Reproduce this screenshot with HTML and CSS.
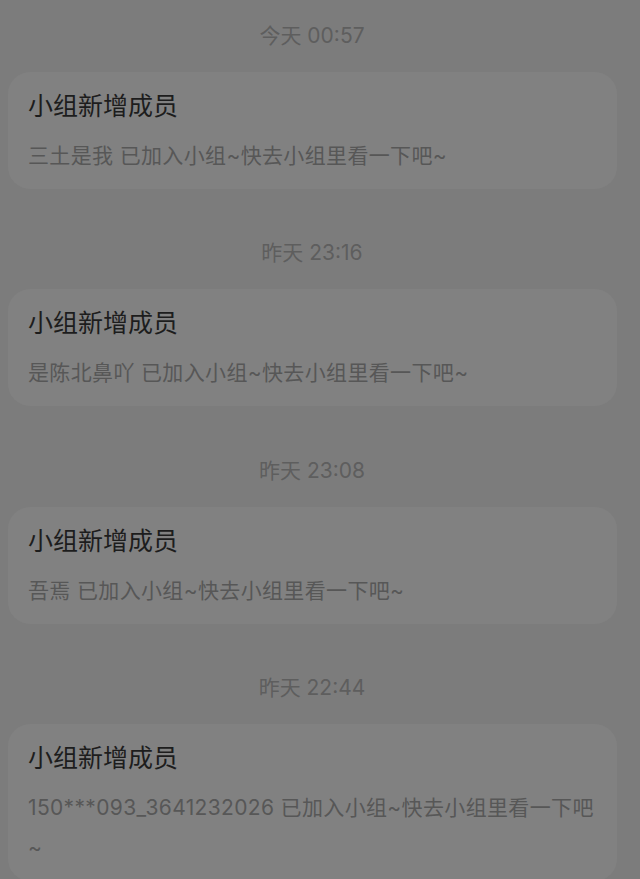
FILE: index.html
```html
<!DOCTYPE html>
<html lang="zh-CN">
<head>
<meta charset="utf-8">
<title>小组消息</title>
<link rel="stylesheet" href="styles.css">
</head>
<body>
<main class="list">
  <section class="group">
    <div class="time">今天 00:57</div>
    <div class="card">
      <div class="card-title">小组新增成员</div>
      <div class="card-body">三土是我 已加入小组~快去小组里看一下吧~</div>
    </div>
  </section>
  <section class="group">
    <div class="time">昨天 23:16</div>
    <div class="card">
      <div class="card-title">小组新增成员</div>
      <div class="card-body">是陈北鼻吖 已加入小组~快去小组里看一下吧~</div>
    </div>
  </section>
  <section class="group">
    <div class="time">昨天 23:08</div>
    <div class="card">
      <div class="card-title">小组新增成员</div>
      <div class="card-body">吾焉 已加入小组~快去小组里看一下吧~</div>
    </div>
  </section>
  <section class="group">
    <div class="time">昨天 22:44</div>
    <div class="card">
      <div class="card-title">小组新增成员</div>
      <div class="card-body">150***093_3641232026 已加入小组~快去小组里看一下吧~</div>
    </div>
  </section>
</main>
</body>
</html>
```
FILE: styles.css
```css
html, body {
  margin: 0;
  padding: 0;
  background: #7c7c7c;
}
body {
  font-family: "Inter", "Noto Sans CJK SC", "Noto Sans", sans-serif;
  overflow: hidden;
  height: 879px;
}
.list {
  display: flex;
  flex-direction: column;
  gap: 28.33px;
  width: 609px;
  padding-left: 8px;
}
.time {
  padding: 22px 0;
  text-align: center;
  font-size: 21px;
  line-height: 28px;
  color: #5e5e5e;
  width: 624px;
  margin-left: -8px;
}
.card {
  background: #818181;
  border-radius: 22px;
  padding: 16px 20px 13px 20px;
}
.card-title {
  font-size: 25px;
  line-height: 36px;
  color: #1d1d1d;
}
.card-body {
  margin-top: 12px;
  font-size: 21px;
  line-height: 40px;
  letter-spacing: 0.35px;
  color: #575757;
  word-break: break-all;
}
```
